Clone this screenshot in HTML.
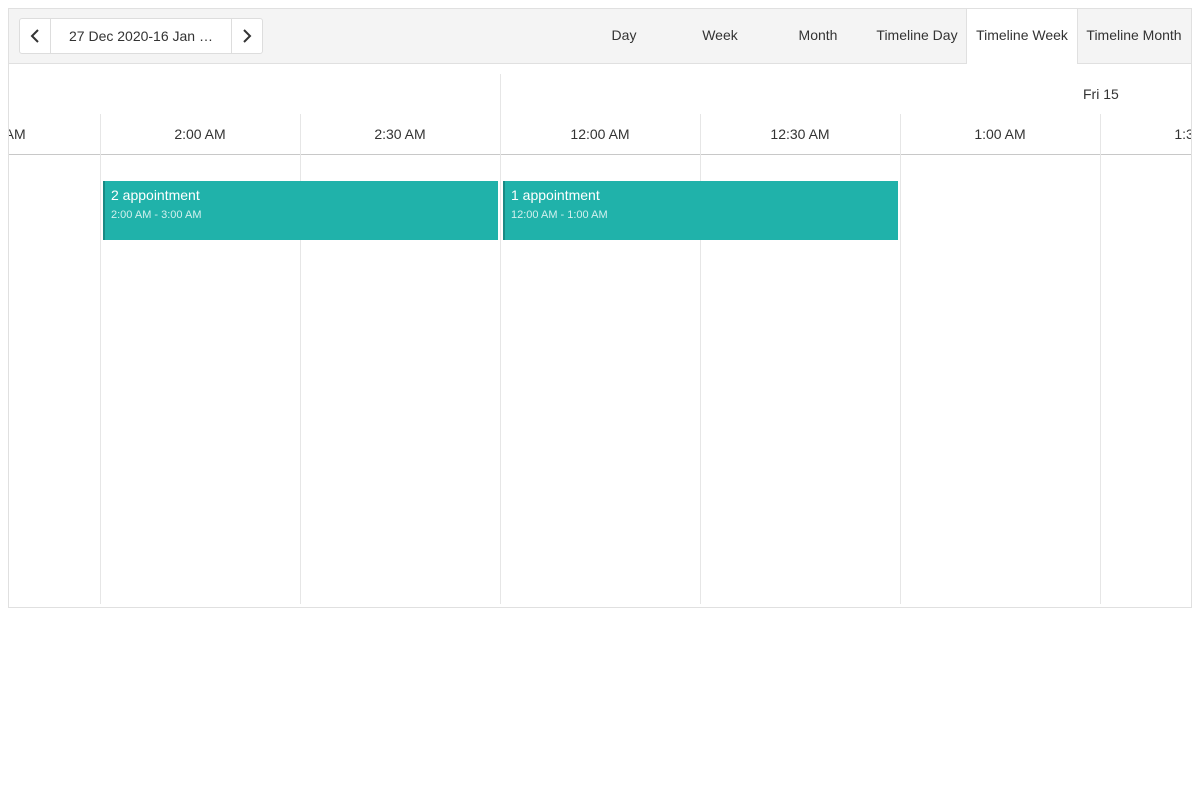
<!DOCTYPE html>
<html><head><style>
body{margin:0;background:#fff;font-family:"Liberation Sans",sans-serif;color:#333;}
.a{position:absolute}
.sch{position:absolute;left:8px;top:8px;width:1182px;height:598px;border:1px solid #e0e0e0;overflow:hidden}
.tb{position:absolute;left:0;top:0;width:1182px;height:54px;background:#f4f4f4;border-bottom:1px solid #e0e0e0}
.tab{position:absolute;top:0;height:54px;line-height:52px;font-size:14px;text-align:center;color:#333}
.vl{position:absolute;width:1px;background:#e6e6e6}
.th{position:absolute;top:105px;font-size:14px;text-align:center;width:200px;line-height:40px}
.ev{position:absolute;top:172px;height:59px;background:#20b2aa;border-left:2px solid #178a84;color:#fff;box-sizing:border-box;padding:6px 6px}
.ev b{font-weight:normal;font-size:14px;display:block}
.ev i{font-style:normal;font-size:11px;opacity:.8;display:block;margin-top:6px}
</style></head><body>
<div class="sch">
<div class="tb">
 <div class="a" style="left:10px;top:9px;width:242px;height:34px;border:1px solid #ddd;border-radius:3px;background:#fff"></div>
 <div class="a" style="left:41px;top:10px;width:1px;height:34px;background:#ddd"></div>
 <div class="a" style="left:222px;top:10px;width:1px;height:34px;background:#ddd"></div>
 <svg class="a" style="left:20px;top:19px" width="14" height="16"><path d="M9 2 L3 8 L9 14" stroke="#333" stroke-width="2" fill="none"/></svg>
 <svg class="a" style="left:231px;top:19px" width="14" height="16"><path d="M4 2 L10 8 L4 14" stroke="#333" stroke-width="2" fill="none"/></svg>
 <div class="a" style="left:42px;top:10px;width:180px;line-height:34px;text-align:center;font-size:14px">27 Dec 2020-16 Jan …</div>
 <div class="tab" style="left:575px;width:80px">Day</div>
 <div class="tab" style="left:671px;width:80px">Week</div>
 <div class="tab" style="left:769px;width:80px">Month</div>
 <div class="tab" style="left:861px;width:94px">Timeline Day</div>
 <div class="tab" style="left:957px;width:110px;height:55px;background:#fff;border-left:1px solid #e0e0e0;border-right:1px solid #e0e0e0">Timeline Week</div>
 <div class="tab" style="left:1069px;width:112px">Timeline Month</div>
</div>
<div class="vl" style="left:491px;top:65px;height:40px"></div>
<div class="a" style="left:1074px;top:77px;font-size:14px">Fri 15</div>
<div class="a" style="left:0;top:145px;width:1182px;height:1px;background:#c8c8c8"></div>
<div class="vl" style="left:91px;top:105px;height:490px"></div>
<div class="vl" style="left:291px;top:105px;height:490px"></div>
<div class="vl" style="left:491px;top:105px;height:490px"></div>
<div class="vl" style="left:691px;top:105px;height:490px"></div>
<div class="vl" style="left:891px;top:105px;height:490px"></div>
<div class="vl" style="left:1091px;top:105px;height:490px"></div>
<div class="th" style="left:-109px">1:30 AM</div>
<div class="th" style="left:91px">2:00 AM</div>
<div class="th" style="left:291px">2:30 AM</div>
<div class="th" style="left:491px">12:00 AM</div>
<div class="th" style="left:691px">12:30 AM</div>
<div class="th" style="left:891px">1:00 AM</div>
<div class="th" style="left:1091px">1:30 AM</div>
<div class="ev" style="left:94px;width:395px"><b>2 appointment</b><i>2:00 AM - 3:00 AM</i></div>
<div class="ev" style="left:494px;width:395px"><b>1 appointment</b><i>12:00 AM - 1:00 AM</i></div>
</div>
</body></html>
